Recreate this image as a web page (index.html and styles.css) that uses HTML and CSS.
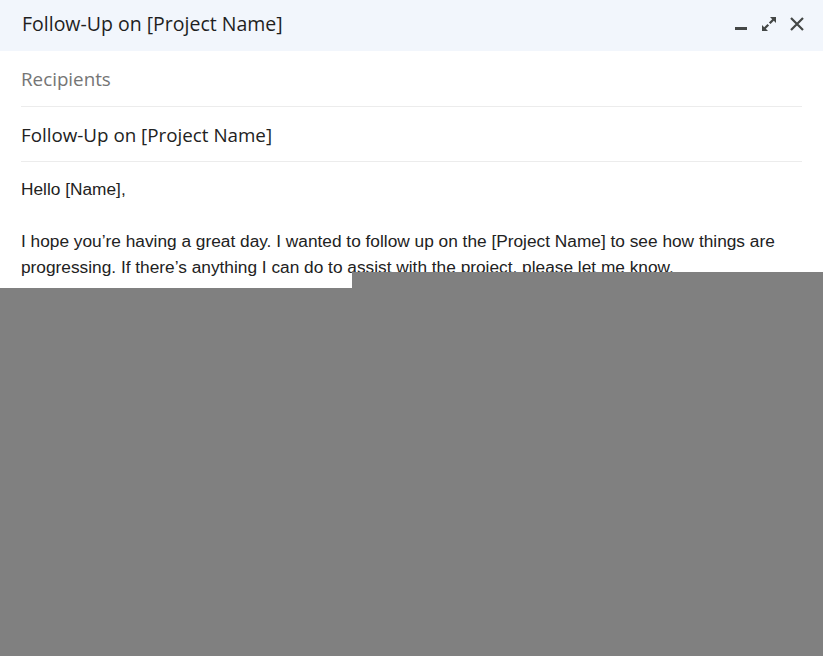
FILE: index.html
```html
<!DOCTYPE html>
<html>
    <head>
        <title>Follow-Up on [Project Name]</title>
        <link rel="stylesheet" href="styles.css">
    </head>
    <body>
        <div id="compose">
            <div id="header">
                <span class="title">Follow-Up on [Project Name]</span>
                <div class="actions">
                    <!--minimize-->
                    <svg width="16" height="16" viewBox="0 0 16 16"><rect x="2" y="11" width="12" height="3" fill="#444746"/></svg>
                    <!--full screen-->
                    <svg width="18" height="18" viewBox="0 0 18 18" fill="#444746">
                        <path d="M10 2h6v6l-2.2-2.2-3.3 3.3-1.6-1.6 3.3-3.3z"/>
                        <path d="M8 16H2v-6l2.2 2.2 3.3-3.3 1.6 1.6-3.3 3.3z"/>
                    </svg>
                    <!--close-->
                    <svg width="16" height="16" viewBox="0 0 16 16"><path d="M2 2L14 14M14 2L2 14" stroke="#444746" stroke-width="2.2"/></svg>
                </div>
            </div>

            <div class="field recipients">Recipients</div>
            <div class="field subject">Follow-Up on [Project Name]</div>

            <div id="message">
                <div>Hello [Name],</div>
                <div><br></div>
                <div>I hope you’re having a great day. I wanted to follow up on the [Project Name] to see how things are progressing. If there’s anything I can do to assist with the project, please let me know.</div>
            </div>
        </div>

        <!--grey blocks laid over the lower part-->
        <div class="cover cover-right"></div>
        <div class="cover cover-full"></div>
    </body>
</html>
```
FILE: styles.css
```css
body {
margin: 0;
background-color: white;
font-family: "Liberation Sans", Arial, sans-serif;
}

#compose {
width: 823px;
height: 656px;
}

#header {
height: 51px;
box-sizing: border-box;
background-color: #f2f6fc;
display: flex;
align-items: center;
justify-content: space-between;
padding: 0 18px 4px 22px;
}

.title {
font-family: "Open Sans", sans-serif;
font-size: 19.5px;
color: #1f1f1f;
}

.actions {
display: flex;
align-items: center;
gap: 11px;
}

.actions svg {
display: block;
}

.field {
margin: 0 21px;
height: 54px;
padding-top: 1px;
box-sizing: content-box;
border-bottom: 1px solid #ececec;
display: flex;
align-items: center;
font-family: "Open Sans", sans-serif;
font-size: 18.8px;
}

.recipients {
color: #757575;
}

.subject {
height: 53px;
color: #222;
}

#message {
margin: 0 21px;
padding-top: 14px;
font-size: 17.3px;
line-height: 26px;
color: #222;
}

.cover {
position: absolute;
background-color: #808080;
}

.cover-right {
left: 352px;
top: 272px;
right: 0;
bottom: 0;
}

.cover-full {
left: 0;
top: 288px;
right: 0;
bottom: 0;
}
```
